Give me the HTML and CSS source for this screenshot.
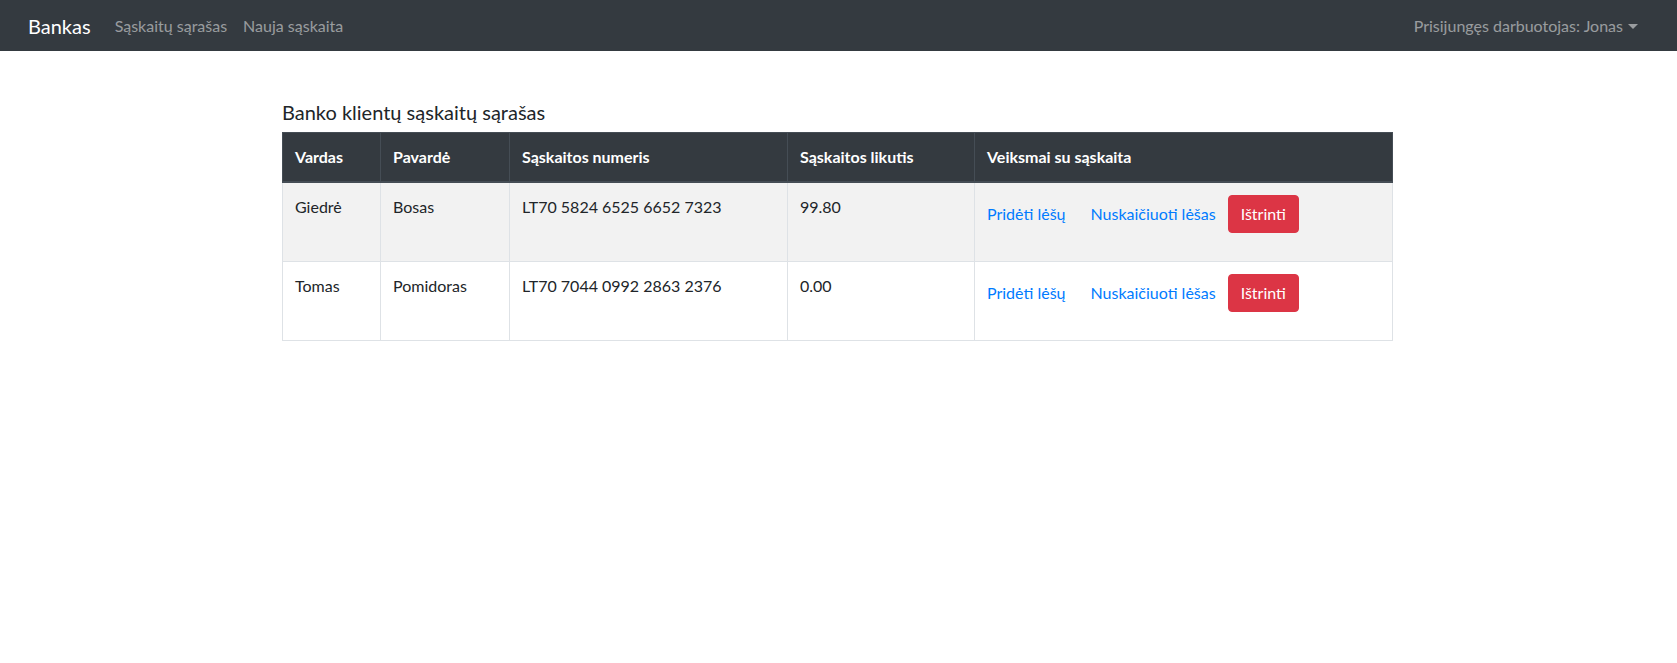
FILE: index.html
```html
<!DOCTYPE html>
<html lang="lt">
<head>
<meta charset="utf-8">
<title>Bankas</title>
<link rel="stylesheet" href="styles.css">
</head>
<body>
<nav class="navbar">
  <a class="brand" href="#">Bankas</a>
  <ul class="nav">
    <li><a class="nav-link" href="#">Sąskaitų sąrašas</a></li>
    <li><a class="nav-link" href="#">Nauja sąskaita</a></li>
  </ul>
  <div class="nav-right">
    <a class="nav-link dropdown" href="#">Prisijungęs darbuotojas: Jonas<span class="caret"></span></a>
  </div>
</nav>
<main class="container">
  <h5 class="title">Banko klientų sąskaitų sąrašas</h5>
  <table class="table">
    <colgroup>
      <col class="c1"><col class="c2"><col class="c3"><col class="c4"><col class="c5">
    </colgroup>
    <thead>
      <tr>
        <th>Vardas</th>
        <th>Pavardė</th>
        <th>Sąskaitos numeris</th>
        <th>Sąskaitos likutis</th>
        <th>Veiksmai su sąskaita</th>
      </tr>
    </thead>
    <tbody>
      <tr class="odd">
        <td>Giedrė</td>
        <td>Bosas</td>
        <td>LT70 5824 6525 6652 7323</td>
        <td>99.80</td>
        <td>
          <div class="actions">
            <a class="link" href="#">Pridėti lėšų</a>
            <a class="link" href="#">Nuskaičiuoti lėšas</a>
            <button class="btn-danger" type="button">Ištrinti</button>
          </div>
        </td>
      </tr>
      <tr>
        <td>Tomas</td>
        <td>Pomidoras</td>
        <td>LT70 7044 0992 2863 2376</td>
        <td>0.00</td>
        <td>
          <div class="actions">
            <a class="link" href="#">Pridėti lėšų</a>
            <a class="link" href="#">Nuskaičiuoti lėšas</a>
            <button class="btn-danger" type="button">Ištrinti</button>
          </div>
        </td>
      </tr>
    </tbody>
  </table>
</main>
</body>
</html>
```
FILE: styles.css
```css
* { box-sizing: border-box; }
html, body { margin: 0; padding: 0; }
body {
  font-family: "Segoe UI", Lato, "Open Sans", sans-serif;
  font-size: 16px;
  line-height: 24px;
  color: #212529;
  background: #fff;
}
a { text-decoration: none; }

.navbar {
  display: flex;
  align-items: center;
  height: 51px;
  background: #343a40;
  padding: 0 31px 0 28px;
}
.brand {
  color: #fff;
  font-size: 20px;
  line-height: 30px;
  margin-right: 16px;
}
.nav {
  display: flex;
  list-style: none;
  margin: 0;
  padding: 0;
}
.nav-link {
  display: block;
  padding: 0 8px;
  color: rgba(255,255,255,.5);
}
.nav-right { margin-left: auto; }
.caret {
  display: inline-block;
  margin-left: 5px;
  vertical-align: 3px;
  border-top: 5px solid rgba(255,255,255,.5);
  border-left: 5px solid transparent;
  border-right: 5px solid transparent;
}

.container {
  width: 1113px;
  margin: 0 auto;
  padding: 49px 3px 0 0;
}
.title {
  margin: 0 0 8px;
  font-size: 20px;
  line-height: 24px;
  font-weight: 400;
}
.table {
  width: 1110px;
  table-layout: fixed;
  border-collapse: collapse;
  border: 1px solid #dee2e6;
}
.c1 { width: 98px; }
.c2 { width: 129px; }
.c3 { width: 278px; }
.c4 { width: 187px; }
.c5 { width: 418px; }
.table th, .table td {
  padding: 12px;
  text-align: left;
  vertical-align: top;
}
.table th {
  background: #343a40;
  color: #fff;
  font-weight: 700;
  border: 1px solid #454d55;
  border-bottom-width: 2px;
}
.table td {
  border: 1px solid #dee2e6;
}
.table tr.odd td { background: #f2f2f2; }

.actions {
  display: flex;
  align-items: center;
  margin-bottom: 16px;
}
.link {
  color: #007bff;
  margin-right: 25px;
}
.link + .link { margin-right: 12px; }
.btn-danger {
  font-family: inherit;
  font-size: 16px;
  line-height: 24px;
  height: 38px;
  padding: 6px 12px;
  color: #fff;
  background: #dc3545;
  border: 1px solid #dc3545;
  border-radius: 4px;
}
```
